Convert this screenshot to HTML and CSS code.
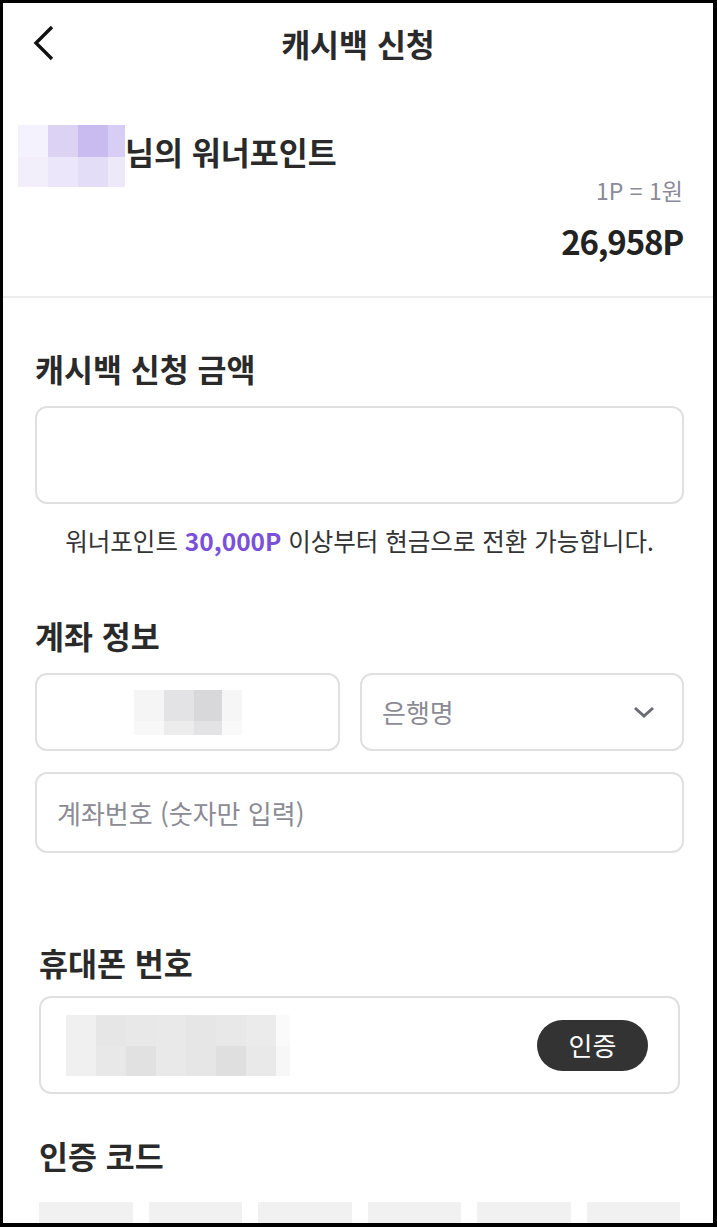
FILE: index.html
```html
<!DOCTYPE html>
<html lang="ko">
<head>
<meta charset="utf-8">
<title>캐시백 신청</title>
<link rel="stylesheet" href="styles.css">
</head>
<body>
<div class="screen">
  <header class="topbar">
    <svg class="back" width="26" height="38" viewBox="0 0 26 38"><path d="M21 3 L5 19 L21 35" fill="none" stroke="#111" stroke-width="3.4" stroke-linecap="butt" stroke-linejoin="miter"/></svg>
    <h1 class="title">캐시백 신청</h1>
  </header>

  <section class="points">
    <div class="name-row">
      <div class="mosaic mosaic-name">
        <i style="background:#f4f2fc"></i><i style="background:#dcd3f4"></i><i style="background:#c9bbef"></i><i style="background:#d8cdf4"></i>
        <i style="background:#f2effb"></i><i style="background:#ebe6f9"></i><i style="background:#e4ddf7"></i><i style="background:#ede9f9"></i>
      </div>
      <span class="name-text">님의 워너포인트</span>
    </div>
    <div class="rate">1P = 1원</div>
    <div class="amount">26,958P</div>
  </section>

  <section class="form">
    <h2 class="label">캐시백 신청 금액</h2>
    <div class="field field-tall"></div>
    <p class="note">워너포인트 <b>30,000P</b> 이상부터 현금으로 전환 가능합니다.</p>

    <h2 class="label label-account">계좌 정보</h2>
    <div class="row">
      <div class="field field-row">
        <div class="mosaic mosaic-holder">
          <i style="background:#f5f5f6"></i><i style="background:#e3e3e5"></i><i style="background:#d8d8db"></i><i style="background:#f6f6f7"></i>
          <i style="background:#f8f8f8"></i><i style="background:#ececed"></i><i style="background:#e3e3e5"></i><i style="background:#f9f9f9"></i>
        </div>
      </div>
      <div class="field field-row select">
        <span class="placeholder">은행명</span>
        <svg class="chev" width="24" height="16" viewBox="0 0 24 16"><path d="M3 4 L12 12 L21 4" fill="none" stroke="#6b6b74" stroke-width="3"/></svg>
      </div>
    </div>
    <div class="field field-acct">
      <span class="placeholder">계좌번호 (숫자만 입력)</span>
    </div>
  </section>

  <section class="phone">
    <h2 class="label">휴대폰 번호</h2>
    <div class="field field-phone">
      <div class="mosaic mosaic-phone">
        <i style="background:#f0f0f0"></i><i style="background:#e6e6e6"></i><i style="background:#e8e8e8"></i><i style="background:#e9e9e9"></i><i style="background:#e6e6e6"></i><i style="background:#e8e8e8"></i><i style="background:#ebebeb"></i><i style="background:#fafafa"></i>
        <i style="background:#f0f0f0"></i><i style="background:#e8e8e8"></i><i style="background:#e1e1e1"></i><i style="background:#e9e9e9"></i><i style="background:#e6e6e6"></i><i style="background:#dfdfdf"></i><i style="background:#e9e9e9"></i><i style="background:#f7f7f7"></i>
      </div>
      <button class="verify">인증</button>
    </div>
    <h2 class="label label-code">인증 코드</h2>
    <div class="codes">
      <span></span><span></span><span></span><span></span><span></span><span></span>
    </div>
  </section>
</div>
</body>
</html>
```

FILE: styles.css
```css
html {
  background: #000;
}
body {
  margin: 3px 4px 4px 3px;
  font-family: "Noto Sans CJK KR", "Noto Sans", sans-serif;
  color: #2a2a2a;
}
.screen {
  width: 710px;
  height: 1220px;
  background: #fff;
  overflow: hidden;
  display: flow-root;
}
.topbar {
  height: 80px;
  display: flex;
  align-items: center;
  justify-content: center;
  position: relative;
}
.back {
  position: absolute;
  left: 28px;
  top: 21px;
}
.title {
  margin: 0;
  font-size: 31.5px;
  font-weight: 700;
  line-height: 40px;
  color: #2a2a2a;
}

.points {
  padding: 42px 30px 35px 15px;
  border-bottom: 2px solid #ececec;
}
.name-row {
  display: flex;
  align-items: flex-start;
  height: 52px;
}
.mosaic {
  display: grid;
  flex-shrink: 0;
}
.mosaic i {
  display: block;
}
.mosaic-name {
  width: 107px;
  height: 62px;
  grid-template-columns: 30px 30px 30px 17px;
  grid-template-rows: 32px 30px;
}
.name-text {
  font-size: 31.5px;
  font-weight: 700;
  line-height: 52px;
  color: #2a2a2a;
}
.rate {
  text-align: right;
  font-size: 23px;
  line-height: 26px;
  color: #8a8a98;
}
.amount {
  margin-top: 18px;
  text-align: right;
  font-size: 33px;
  line-height: 40px;
  font-weight: 700;
  letter-spacing: -1.2px;
  color: #222;
}

.form {
  padding: 50px 29px 0 32px;
}
.label {
  margin: 0;
  font-size: 31.5px;
  font-weight: 700;
  line-height: 40px;
  color: #2a2a2a;
}
.field {
  box-sizing: border-box;
  border: 2px solid #e0e0e0;
  border-radius: 12px;
  background: #fff;
}
.field-tall {
  margin-top: 18px;
  height: 98px;
}
.note {
  margin: 22px 0 0;
  text-align: center;
  font-size: 24.5px;
  line-height: 30px;
  color: #333;
}
.note b {
  color: #7a4fd9;
  font-weight: 700;
}
.label-account {
  margin-top: 59px;
}
.row {
  margin-top: 18px;
  display: grid;
  grid-template-columns: 305px 1fr;
  gap: 20px;
}
.field-row {
  height: 78px;
  display: flex;
  align-items: center;
}
.mosaic-holder {
  margin: 0 auto;
  width: 108px;
  height: 45px;
  grid-template-columns: 30px 30px 28px 20px;
  grid-template-rows: 31px 14px;
}
.select {
  padding: 0 26px 0 20px;
  justify-content: space-between;
}
.placeholder {
  font-size: 26px;
  line-height: 32px;
  color: #8b8b94;
}
.chev {
  display: block;
}
.field-acct {
  margin-top: 21px;
  height: 81px;
  display: flex;
  align-items: center;
  padding-left: 20px;
}

.phone {
  padding: 89px 33px 0 36px;
}
.field-phone {
  margin-top: 14px;
  height: 98px;
  display: flex;
  align-items: center;
  justify-content: space-between;
  padding: 0 30px 0 25px;
}
.mosaic-phone {
  width: 224px;
  height: 61px;
  grid-template-columns: repeat(7, 30px) 14px;
  grid-template-rows: 31px 30px;
}
.verify {
  width: 111px;
  height: 51px;
  border: none;
  border-radius: 26px;
  background: #333;
  color: #fff;
  font-family: "Noto Sans CJK KR", sans-serif;
  font-size: 26px;
  line-height: 30px;
  padding: 0;
}
.label-code {
  margin-top: 41px;
}
.codes {
  margin-top: 27px;
  display: grid;
  grid-template-columns: repeat(6, 1fr);
  gap: 16px;
}
.codes span {
  height: 60px;
  background: #f1f1f1;
}
```
